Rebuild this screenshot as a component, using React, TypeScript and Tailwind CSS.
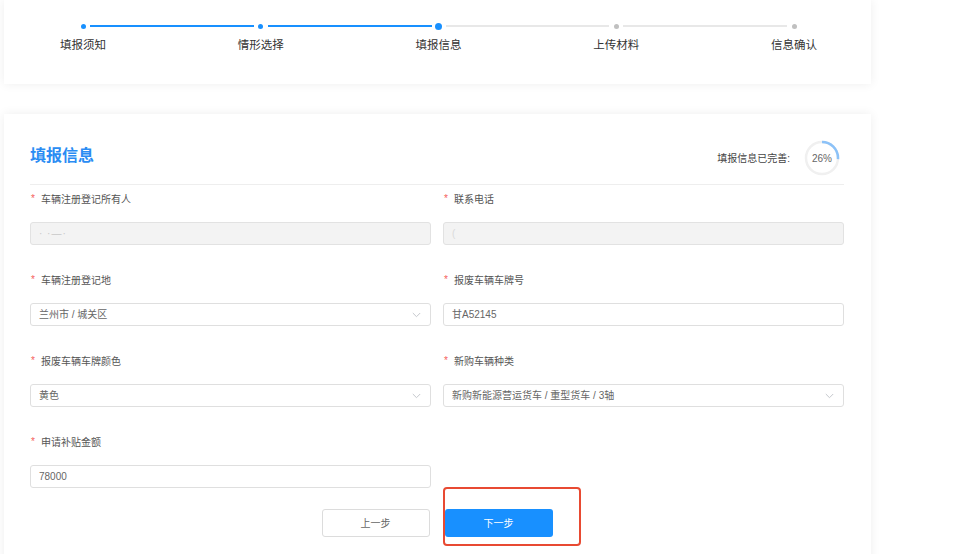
import React from "react";

const FONT = { fontFamily: '"Liberation Sans", "Noto Sans CJK SC", sans-serif' };

const steps = [
  { label: "填报须知", state: "done" },
  { label: "情形选择", state: "done" },
  { label: "填报信息", state: "active" },
  { label: "上传材料", state: "todo" },
  { label: "信息确认", state: "todo" },
];

function Chevron() {
  return (
    <svg width="9" height="6" viewBox="0 0 9 6" fill="none">
      <path d="M0.8 1 L4.5 4.7 L8.2 1" stroke="#c4c7cc" strokeWidth="1" />
    </svg>
  );
}

function Label({ text }: { text: string }) {
  return (
    <div className="flex items-center h-4 mb-[15px] text-[10px] text-[#555]">
      <span className="w-[11px] pl-[1px] text-[#f5605b] text-[10px] leading-none">*</span>
      <span>{text}</span>
    </div>
  );
}

function Field({
  label,
  value,
  select,
  disabled,
  mask,
}: {
  label: string;
  value?: string;
  select?: boolean;
  disabled?: boolean;
  mask?: React.ReactNode;
}) {
  return (
    <div className="flex flex-col">
      <Label text={label} />
      <div
        className={
          "h-[23px] rounded-[3px] border flex items-center justify-between pl-[8px] pr-[9px] text-[10px] text-[#666] " +
          (disabled ? "bg-[#f3f3f3] border-[#e2e2e2]" : "bg-white border-[#dfdfdf]")
        }
      >
        <span className="whitespace-nowrap">{mask ?? value}</span>
        {select && <Chevron />}
      </div>
    </div>
  );
}

function Progress() {
  const r = 16;
  const c = 2 * Math.PI * r;
  const pct = 0.26;
  return (
    <div className="relative w-[36px] h-[36px]">
      <svg width="36" height="36" viewBox="0 0 36 36" className="-rotate-90">
        <circle cx="18" cy="18" r={r} fill="none" stroke="#f0f0f0" strokeWidth="2.5" />
        <circle
          cx="18"
          cy="18"
          r={r}
          fill="none"
          stroke="#8cc2f8"
          strokeWidth="2.5"
          strokeDasharray={`${c * pct} ${c}`}
        />
      </svg>
      <div className="absolute inset-0 flex items-center justify-center text-[10px] text-[#666]">26%</div>
    </div>
  );
}

export default function App() {
  return (
    <div className="w-[960px] h-[554px] overflow-hidden bg-white" style={FONT}>
      <div className="pl-[4px] w-[871px]">
        {/* Steps card */}
        <div className="w-[867px] h-[84px] bg-white shadow-[0_0_10px_rgba(0,0,0,0.07)] pl-[79px] pr-[77px] pt-[22px]">
          <div className="flex items-center h-2">
            {steps.map((s, i) => {
              const dot =
                s.state === "active"
                  ? "w-[7px] h-[7px] bg-[#1890ff]"
                  : s.state === "done"
                  ? "w-[5px] h-[5px] bg-[#1890ff]"
                  : "w-[5px] h-[5px] bg-[#c0c0c0]";
              const lineBlue = i < 2;
              return (
                <React.Fragment key={s.label}>
                  <div className="w-0 flex justify-center">
                    <span className={"shrink-0 rounded-full " + dot} />
                  </div>
                  {i < steps.length - 1 && (
                    <div
                      className={
                        "flex-1 mx-[7px] " +
                        (lineBlue ? "h-[2px] bg-[#1890ff]" : "h-[2px] bg-[#e8e8e8]")
                      }
                    />
                  )}
                </React.Fragment>
              );
            })}
          </div>
          <div className="flex justify-between mt-[7px]">
            {steps.map((s) => (
              <div key={s.label} className="w-0 flex justify-center">
                <span className="whitespace-nowrap text-[11.5px] leading-4 text-[#333]">{s.label}</span>
              </div>
            ))}
          </div>
        </div>

        {/* Form card */}
        <div className="mt-[30px] w-[867px] h-[460px] bg-white shadow-[0_0_10px_rgba(0,0,0,0.07)] pl-[26px] pr-[27px] pt-[26px]">
          <div className="flex items-center justify-between pb-[8px] border-b border-[#eeeeee]">
            <div className="text-[16px] font-bold text-[#2a8cf3] leading-none mb-[4px]">填报信息</div>
            <div className="flex items-center">
              <span className="text-[10px] text-[#444]">填报信息已完善:</span>
              <div className="ml-[14px] mr-[4px]">
                <Progress />
              </div>
            </div>
          </div>

          <div className="pt-[6px] grid grid-cols-2 gap-x-[12px] gap-y-[27px]">
            <Field
              label="车辆注册登记所有人"
              disabled
              mask={<span className="text-[#c9c9c9] tracking-[1px]">· ·—·</span>}
            />
            <Field label="联系电话" disabled mask={<span className="text-[#dadada]">(</span>} />
            <Field label="车辆注册登记地" value="兰州市 / 城关区" select />
            <Field label="报废车辆车牌号" value="甘A52145" />
            <Field label="报废车辆车牌颜色" value="黄色" select />
            <Field label="新购车辆种类" value="新购新能源营运货车 / 重型货车 / 3轴" select />
            <Field label="申请补贴金额" value="78000" />
            <div />
          </div>

          <div className="mt-[21px] flex justify-center gap-[15px]">
            <button className="w-[108px] h-[28px] rounded-[3px] border border-[#dcdcdc] bg-white text-[10px] text-[#666]">
              上一步
            </button>
            <div className="relative">
              <button className="w-[108px] h-[28px] rounded-[3px] bg-[#1890ff] text-[10px] text-white">
                下一步
              </button>
              <span className="absolute left-[-2px] top-[-22px] w-[138px] h-[59px] border-2 border-[#e84a32] rounded-[4px] pointer-events-none" />
            </div>
          </div>
        </div>
      </div>
    </div>
  );
}
